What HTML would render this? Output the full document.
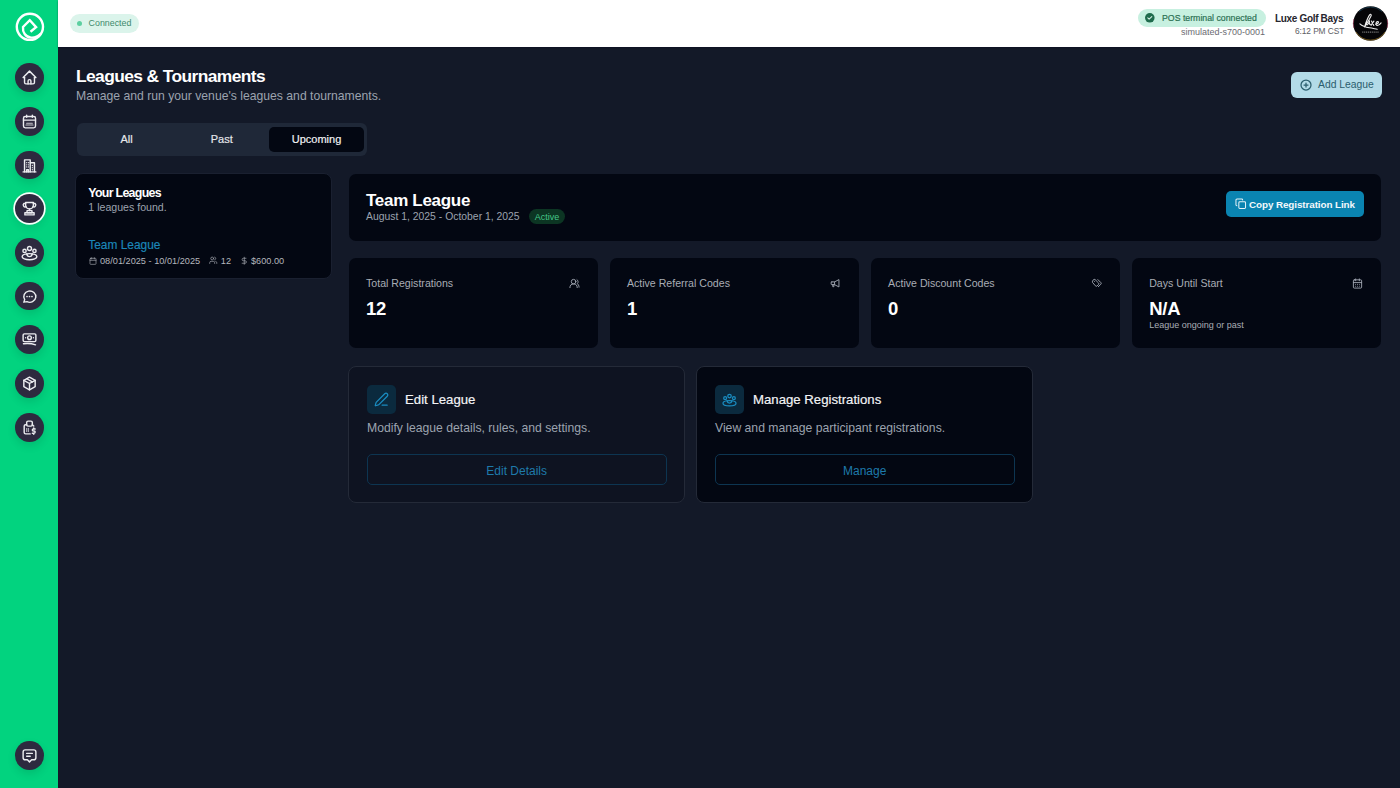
<!DOCTYPE html>
<html><head><meta charset="utf-8">
<style>
*{margin:0;padding:0;box-sizing:border-box}
html,body{width:1400px;height:788px;overflow:hidden;background:#131928;font-family:"Liberation Sans",sans-serif}
.abs{position:absolute}
#side{position:absolute;left:0;top:0;width:59.3px;height:788px;background:#02d37f;border-right:1px solid #15162a}
.nav{position:absolute;left:14.8px;width:28.8px;height:28.8px;border-radius:50%;background:#2d2a3f;box-shadow:0 4px 9px rgba(0,0,0,.11)}
.nav svg{position:absolute;left:6px;top:6px}
.nav.act{box-shadow:0 0 0 1.7px #f4fffa,0 4px 9px rgba(0,0,0,.11)}
#hdr{position:absolute;left:58.4px;top:0;width:1342px;height:46.8px;background:#fff;box-shadow:0 1px 1.5px rgba(10,10,30,.5)}
.pill{position:absolute;border-radius:999px}
.t{position:absolute;white-space:nowrap;line-height:1}
.card{position:absolute;background:#030712;border-radius:7px}
svg{overflow:visible}
</style></head><body>
<div id="side">
  <svg class="abs" style="left:14.5px;top:12.3px" width="30" height="30" viewBox="0 0 30 30">
    <circle cx="14.9" cy="14.8" r="13.1" fill="none" stroke="#fff" stroke-width="2.4"/>
    <path d="M15.5 19.8L21.1 15.2L14.8 8.2L8 15C7.4 20 10.5 25.2 16 25.6C19.5 25.9 23 24.5 25.6 21.8" fill="none" stroke="#fff" stroke-width="2.4" stroke-linejoin="miter" stroke-linecap="butt"/>
  </svg>
  <div class="nav" style="top:63.0px"><svg width="17" height="17" viewBox="0 0 24 24"><g fill="none" stroke="#ececf0" stroke-width="2" stroke-linecap="round" stroke-linejoin="round"><path d="M5 12H3l9-9 9 9h-2"/><path d="M5 12v7a2 2 0 0 0 2 2h10a2 2 0 0 0 2-2v-7"/><path d="M10 21v-4a2 2 0 0 1 4 0v4"/></g></svg></div>
  <div class="nav" style="top:106.8px"><svg width="17" height="17" viewBox="0 0 24 24"><g fill="none" stroke="#ececf0" stroke-width="2" stroke-linecap="round" stroke-linejoin="round"><rect x="3.5" y="5" width="17" height="16" rx="2.5"/><path d="M3.5 10h17M8 3v3M16 3v3"/><path d="M7 17h10M8 14.5h8" stroke-width="1.6" opacity=".8"/></g></svg></div>
  <div class="nav" style="top:150.5px"><svg width="17" height="17" viewBox="0 0 24 24"><g fill="none" stroke="#ececf0" stroke-width="2" stroke-linecap="round" stroke-linejoin="round"><path d="M3 21h18"/><path d="M5 21V4h8v17"/><path d="M13 8h6v13"/><path d="M8 8h0M10.5 8h0M8 11h0M10.5 11h0M8 14h0M10.5 14h0M16 12h0M16 15h0M16 18h0" stroke-width="1.8"/><path d="M8 21v-3h2.5v3"/></g></svg></div>
  <div class="nav act" style="top:194.3px"><svg width="17" height="17" viewBox="0 0 24 24"><g fill="none" stroke="#ececf0" stroke-width="2" stroke-linecap="round" stroke-linejoin="round"><path d="M6.5 3.5h11v3.5a5.5 5.5 0 0 1-11 0z"/><path d="M6.5 5H4a2.8 2.8 0 0 0 3.2 4.5M17.5 5H20a2.8 2.8 0 0 1-3.2 4.5"/><path d="M12 12.5v2.5"/><path d="M8.5 15h7v3h-7z"/><path d="M5.5 18h13v3h-13z"/></g></svg></div>
  <div class="nav" style="top:237.9px"><svg width="17" height="17" viewBox="0 0 24 24"><g fill="none" stroke="#ececf0" stroke-width="2" stroke-linecap="round" stroke-linejoin="round"><circle cx="12" cy="6.4" r="2.8"/><circle cx="5" cy="9.8" r="2.3"/><circle cx="19" cy="9.8" r="2.3"/><path d="M8 14C4 14.5 1.6 16 1.6 18c0 2.4 4.7 4.3 10.4 4.3S22.4 20.4 22.4 18c0-2-2.4-3.5-6.4-4"/><path d="M8 14c.6 2.5 2 3.8 4 3.8s3.4-1.3 4-3.8c-1.2-.3-2.6-.4-4-.4s-2.8.1-4 .4z"/></g></svg></div>
  <div class="nav" style="top:281.5px"><svg width="17" height="17" viewBox="0 0 24 24"><g fill="none" stroke="#ececf0" stroke-width="2" stroke-linecap="round" stroke-linejoin="round"><path d="M4 20l1.2-3.6A8.5 8 0 1 1 8.5 19.3z"/><path d="M8.5 12h.01M12 12h.01M15.5 12h.01" stroke-width="2.4"/></g></svg></div>
  <div class="nav" style="top:325.2px"><svg width="17" height="17" viewBox="0 0 24 24"><g fill="none" stroke="#ececf0" stroke-width="2" stroke-linecap="round" stroke-linejoin="round"><rect x="3" y="4" width="18" height="11" rx="1.8"/><circle cx="12" cy="9.5" r="2.6"/><path d="M6.5 9.5h.01M17.5 9.5h.01"/><path d="M3.5 18c5-.6 11-.6 17 1.5"/></g></svg></div>
  <div class="nav" style="top:368.9px"><svg width="17" height="17" viewBox="0 0 24 24"><g fill="none" stroke="#ececf0" stroke-width="2" stroke-linecap="round" stroke-linejoin="round" stroke-width="2.3"><path d="M12 3l8 4.5v9L12 21l-8-4.5v-9z"/><path d="M4 7.5l8 4.5 8-4.5M12 12v9"/><path d="M8 5.3l8 4.5"/></g></svg></div>
  <div class="nav" style="top:412.8px"><svg width="17" height="17" viewBox="0 0 24 24"><g fill="none" stroke="#ececf0" stroke-width="2" stroke-linecap="round" stroke-linejoin="round"><rect x="8" y="3" width="8" height="7" rx="2"/><path d="M8 8H6.5a2 2 0 0 0-2 2v9a2 2 0 0 0 2 2H13"/><path d="M16 8l2 2"/><path d="M8 14h0M10.5 14h0M8 17h0M10.5 17h0"/><path d="M20 14h-2.5a1.5 1.5 0 0 0 0 3h1a1.5 1.5 0 0 1 0 3H16M18 12.5v1.5M18 20v1.5"/></g></svg></div>
  <div class="nav" style="top:740.8px"><svg width="17" height="17" viewBox="0 0 24 24"><g fill="none" stroke="#ececf0" stroke-width="2" stroke-linecap="round" stroke-linejoin="round"><path d="M9 18H6a3 3 0 0 1-3-3V7a3 3 0 0 1 3-3h12a3 3 0 0 1 3 3v8a3 3 0 0 1-3 3h-3l-3 3z"/><path d="M8 9h8M8 13h5"/></g></svg></div>
</div>
<div id="hdr"></div>
<div class="pill" style="left:70px;top:14px;width:69px;height:19px;background:#dbf4eb"></div>
<div class="abs" style="left:76.8px;top:20.6px;width:5.6px;height:5.6px;border-radius:50%;background:#5ccfa0"></div>
<div class="t" style="left:88.6px;top:19.31px;font-size:8.85px;font-weight:normal;color:#3e8a6c;">Connected</div>
<div class="pill" style="left:1138px;top:9px;width:128px;height:17.5px;background:#c7f0e0"></div>
<svg class="abs" style="left:1145.2px;top:12.8px" width="9.6" height="9.6" viewBox="0 0 24 24"><circle cx="12" cy="12" r="12" fill="#1f6b4c"/><path d="M7 12.3l3.3 3.2L17 9" fill="none" stroke="#d9f3e8" stroke-width="2.6" stroke-linecap="round" stroke-linejoin="round"/></svg>
<div class="t" style="left:1162px;top:13.89px;font-size:8.75px;font-weight:normal;color:#2a6f52;-webkit-text-stroke:0.18px currentColor;">POS terminal connected</div>
<div class="t" style="left:1181px;top:27.98px;font-size:9.0px;font-weight:normal;color:#6b6b72;">simulated-s700-0001</div>
<div class="t" style="left:1275px;top:13.93px;font-size:10.0px;font-weight:bold;color:#26262e;letter-spacing:-0.33px;">Luxe Golf Bays</div>
<div class="t" style="left:1295px;top:26.69px;font-size:8.4px;font-weight:normal;color:#5d5d64;letter-spacing:-0.1px;">6:12 PM CST</div>
<svg class="abs" style="left:1353.3px;top:6px" width="35" height="35" viewBox="0 0 35 35">
<circle cx="17.5" cy="17.5" r="17.3" fill="#050508"/>
<path d="M6 5.5A17 17 0 0 1 29 5.5" fill="none" stroke="#2a6f90" stroke-width=".8" opacity=".55"/>
<path d="M.9 13A17 17 0 0 0 .9 22M34.1 13A17 17 0 0 1 34.1 22" fill="none" stroke="#a02a50" stroke-width=".9" opacity=".6"/>
<path d="M3 26A17 17 0 0 0 32 26" fill="none" stroke="#c8962a" stroke-width=".9" opacity=".6"/>
<g fill="none" stroke="#eeeeee" stroke-width="1.1" stroke-linecap="round" stroke-linejoin="round">
<path d="M11.6 20.8C13 16.5 14.6 11.5 16.6 8.9c1.3-1.4 2.2-.3 1.2 1.7-1.5 3-4 7.2-6.2 10.2"/>
<path d="M6.9 17.9c2.4 2.3 6 3.4 9.5 3.9 2.8.4 5.6 1.1 7.8 1.5"/>
<path d="M13.8 15.3c-.8 2-.6 3.9.6 3.5 1-.4 1.6-2.4 2.1-3.9-.3 2-.2 3.8.9 3.5"/>
<path d="M18.4 15c.9 1.4 1.7 2.9 2.4 4.4M20.9 15.1c-1 1.4-1.9 2.8-2.9 4.3"/>
<path d="M22.6 18.2c1.5-.1 2.9-1 2.9-2.1 0-1-1.4-.8-2.1.3-.9 1.5-.4 3.1 1.1 3.1 1.3 0 2.6-1.2 3.6-2.6"/>
</g>
<path d="M9.2 26.1h17" stroke="#bdbdbd" stroke-width="1.2" stroke-dasharray="1.2 .7" opacity=".6"/>
</svg>
<div class="t" style="left:76px;top:68.17px;font-size:17.4px;font-weight:bold;color:#ffffff;letter-spacing:-0.6px;">Leagues &amp; Tournaments</div>
<div class="t" style="left:76px;top:90.37px;font-size:12.2px;font-weight:normal;color:#9ca3af;">Manage and run your venue's leagues and tournaments.</div>
<div class="abs" style="left:1291.3px;top:71.8px;width:91px;height:26px;border-radius:6px;background:#b3dbe8"></div>
<svg class="abs" style="left:1299.6px;top:78.8px" width="12" height="12" viewBox="0 0 24 24"><g fill="none" stroke="#2b5e6e" stroke-width="2.5" stroke-linecap="round"><circle cx="12" cy="12" r="10"/><path d="M8 12h8M12 8v8"/></g></svg>
<div class="t" style="left:1318px;top:80.44px;font-size:10.35px;font-weight:normal;color:#2b5d6d;">Add League</div>
<div class="abs" style="left:76.5px;top:123.3px;width:290.5px;height:33px;border-radius:6px;background:#1f2838"></div>
<div class="abs" style="left:269.3px;top:126.5px;width:94.7px;height:25.8px;border-radius:5px;background:#030712"></div>
<div class="t" style="left:26.5px;width:200px;text-align:center;top:134.09px;font-size:11.0px;font-weight:normal;color:#e5e7eb;-webkit-text-stroke:0.18px currentColor;">All</div>
<div class="t" style="left:121.69999999999999px;width:200px;text-align:center;top:134.09px;font-size:11.0px;font-weight:normal;color:#e5e7eb;-webkit-text-stroke:0.18px currentColor;">Past</div>
<div class="t" style="left:216.5px;width:200px;text-align:center;top:134.09px;font-size:11.0px;font-weight:normal;color:#f3f4f6;-webkit-text-stroke:0.18px currentColor;">Upcoming</div>
<div class="card" style="left:75.3px;top:173.2px;width:256.3px;height:106px;border:1.7px solid #1a2030;border-radius:8px"></div>
<div class="t" style="left:88.3px;top:187.40px;font-size:12.4px;font-weight:bold;color:#ffffff;letter-spacing:-0.7px;">Your Leagues</div>
<div class="t" style="left:88.3px;top:202.43px;font-size:10.6px;font-weight:normal;color:#9ca3af;">1 leagues found.</div>
<div class="t" style="left:88.3px;top:239.73px;font-size:11.9px;font-weight:normal;color:#1b86b8;-webkit-text-stroke:0.18px currentColor;">Team League</div>
<svg class="abs" style="left:88.7px;top:256.5px" width="8" height="8" viewBox="0 0 24 24"><g fill="none" stroke="#a3a6ae" stroke-width="2" stroke-linecap="round" stroke-linejoin="round"><rect x="3" y="4" width="18" height="18" rx="2"/><path d="M16 2v4M8 2v4M3 10h18"/></g></svg>
<div class="t" style="left:100px;top:256.71px;font-size:9.2px;font-weight:normal;color:#b3b6bd;">08/01/2025 - 10/01/2025</div>
<svg class="abs" style="left:208.8px;top:256px" width="8.5" height="8.5" viewBox="0 0 24 24"><g fill="none" stroke="#a3a6ae" stroke-width="2" stroke-linecap="round" stroke-linejoin="round"><path d="M16 21v-2a4 4 0 0 0-4-4H6a4 4 0 0 0-4 4v2"/><circle cx="9" cy="7" r="4"/><path d="M22 21v-2a4 4 0 0 0-3-3.87M16 3.13a4 4 0 0 1 0 7.75"/></g></svg>
<div class="t" style="left:220.8px;top:256.71px;font-size:9.2px;font-weight:normal;color:#b3b6bd;">12</div>
<svg class="abs" style="left:239.5px;top:255.5px" width="8.5" height="9.5" viewBox="0 0 24 24"><g fill="none" stroke="#a3a6ae" stroke-width="2" stroke-linecap="round" stroke-linejoin="round"><path d="M12 2v20M17 5H9.5a3.5 3.5 0 0 0 0 7h5a3.5 3.5 0 0 1 0 7H6"/></g></svg>
<div class="t" style="left:251px;top:256.71px;font-size:9.2px;font-weight:normal;color:#b3b6bd;">$600.00</div>
<div class="card" style="left:348.6px;top:174px;width:1032.2px;height:66.7px"></div>
<div class="t" style="left:366px;top:192.41px;font-size:17.0px;font-weight:bold;color:#ffffff;letter-spacing:-0.3px;">Team League</div>
<div class="t" style="left:366px;top:212.40px;font-size:10.4px;font-weight:normal;color:#9ca3af;">August 1, 2025 - October 1, 2025</div>
<div class="pill" style="left:529.4px;top:209px;width:35.3px;height:15px;background:#0c3523"></div>
<div class="t" style="left:527.0px;width:40px;text-align:center;top:212.88px;font-size:9.0px;font-weight:normal;color:#45c689;">Active</div>
<div class="abs" style="left:1225.6px;top:191.2px;width:138.2px;height:26.1px;border-radius:5px;background:#0a84b1"></div>
<svg class="abs" style="left:1234.5px;top:198px" width="11.5" height="11.5" viewBox="0 0 24 24"><g fill="none" stroke="#e6f3f8" stroke-width="2.1" stroke-linecap="round" stroke-linejoin="round"><rect x="8" y="8" width="14" height="14" rx="2"/><path d="M4 16c-1.1 0-2-.9-2-2V4c0-1.1.9-2 2-2h10c1.1 0 2 .9 2 2"/></g></svg>
<div class="t" style="left:1249px;top:199.82px;font-size:9.9px;font-weight:bold;color:#f2f8fb;letter-spacing:-0.1px;">Copy Registration Link</div>
<div class="card" style="left:348.7px;top:258.3px;width:249px;height:90px"></div>
<div class="t" style="left:366.0px;top:278.03px;font-size:10.6px;font-weight:normal;color:#a9adb5;">Total Registrations</div>
<svg class="abs" style="left:569.2px;top:277.5px" width="11" height="11" viewBox="0 0 24 24"><g fill="none" stroke="#a3a9b4" stroke-width="2" stroke-linecap="round" stroke-linejoin="round"><path d="M18 21a8 8 0 0 0-16 0"/><circle cx="10" cy="8" r="5"/><path d="M22 20c0-3.37-2-6.5-4-8a5 5 0 0 0-.45-8.3"/></g></svg>
<div class="t" style="left:366.0px;top:299.54px;font-size:18.5px;font-weight:bold;color:#ffffff;letter-spacing:-0.2px;">12</div>
<div class="card" style="left:609.6px;top:258.3px;width:249px;height:90px"></div>
<div class="t" style="left:626.9px;top:278.03px;font-size:10.6px;font-weight:normal;color:#a9adb5;">Active Referral Codes</div>
<svg class="abs" style="left:830.1px;top:277.5px" width="11" height="11" viewBox="0 0 24 24"><g fill="none" stroke="#a3a9b4" stroke-width="2" stroke-linecap="round" stroke-linejoin="round"><path d="M4 8.5h6v6H4a1.5 1.5 0 0 1-1.5-1.5v-3A1.5 1.5 0 0 1 4 8.5z"/><path d="M10 8.5l9.5-5v16l-9.5-5"/><path d="M6 14.5v4.5h2.5v-4.5"/></g></svg>
<div class="t" style="left:626.9px;top:299.54px;font-size:18.5px;font-weight:bold;color:#ffffff;letter-spacing:-0.2px;">1</div>
<div class="card" style="left:870.8px;top:258.3px;width:249px;height:90px"></div>
<div class="t" style="left:888.0999999999999px;top:278.03px;font-size:10.6px;font-weight:normal;color:#a9adb5;">Active Discount Codes</div>
<svg class="abs" style="left:1091.3px;top:277.5px" width="11" height="11" viewBox="0 0 24 24"><g fill="none" stroke="#a3a9b4" stroke-width="2" stroke-linecap="round" stroke-linejoin="round"><path d="M3 8.5A5 5 0 0 1 8.5 3L16.5 11a2.2 2.2 0 0 1 0 3.1l-3.4 3.4a2.2 2.2 0 0 1-3.1 0z"/><path d="M7.5 7.5h.01"/><path d="M15 3.5l6.5 6.5a2.5 2.5 0 0 1 0 3.5L16 19"/></g></svg>
<div class="t" style="left:888.0999999999999px;top:299.54px;font-size:18.5px;font-weight:bold;color:#ffffff;letter-spacing:-0.2px;">0</div>
<div class="card" style="left:1131.9px;top:258.3px;width:249px;height:90px"></div>
<div class="t" style="left:1149.2px;top:278.03px;font-size:10.6px;font-weight:normal;color:#a9adb5;">Days Until Start</div>
<svg class="abs" style="left:1352.4px;top:277.5px" width="11" height="11" viewBox="0 0 24 24"><g fill="none" stroke="#a3a9b4" stroke-width="2" stroke-linecap="round" stroke-linejoin="round"><rect x="3" y="4" width="18" height="18" rx="2"/><path d="M16 2v4M8 2v4M3 10h18M8 14h.01M12 14h.01M16 14h.01M8 18h.01M12 18h.01M16 18h.01"/></g></svg>
<div class="t" style="left:1149.2px;top:299.54px;font-size:18.5px;font-weight:bold;color:#ffffff;letter-spacing:-0.2px;">N/A</div>
<div class="t" style="left:1149.2px;top:321.38px;font-size:9.0px;font-weight:normal;color:#a9adb5;">League ongoing or past</div>
<div class="card" style="left:348.4px;top:366.3px;width:336.2px;height:136.9px;background:#0e1321;border:1.2px solid #242a38;border-radius:8px"></div>
<div class="card" style="left:696.4px;top:366.3px;width:336.2px;height:136.9px;background:#030712;border:1.2px solid #242a38;border-radius:8px"></div>
<div class="abs" style="left:367.0px;top:384.6px;width:29px;height:29px;border-radius:5px;background:#0b2a3e"></div>
<svg class="abs" style="left:374.0px;top:391.6px" width="15" height="15" viewBox="0 0 24 24"><g fill="none" stroke="#1a8cc0" stroke-width="2" stroke-linecap="round" stroke-linejoin="round"><path d="M13 21h8"/><path d="M21.2 6.8a2.8 2.8 0 0 0-4-4L3.8 16.2a2 2 0 0 0-.5.8l-1.3 4.4a.5.5 0 0 0 .6.6l4.4-1.3a2 2 0 0 0 .8-.5z"/></g></svg>
<div class="t" style="left:405.0px;top:393.13px;font-size:13.2px;font-weight:normal;color:#f3f4f6;-webkit-text-stroke:0.18px currentColor;">Edit League</div>
<div class="t" style="left:367.0px;top:422.07px;font-size:12.2px;font-weight:normal;color:#9ca3af;">Modify league details, rules, and settings.</div>
<div class="abs" style="left:366.5px;top:454.1px;width:300.5px;height:31.4px;border-radius:5px;border:1px solid #0d3551"></div>
<div class="t" style="left:416.70000000000005px;width:200px;text-align:center;top:464.54px;font-size:12.0px;font-weight:normal;color:#1e7aab;">Edit Details</div>
<div class="abs" style="left:715.0px;top:384.6px;width:29px;height:29px;border-radius:5px;background:#0b2a3e"></div>
<svg class="abs" style="left:722.0px;top:391.6px" width="15" height="15" viewBox="0 0 24 24"><g fill="none" stroke="#1a8cc0" stroke-width="2" stroke-linecap="round" stroke-linejoin="round"><circle cx="12" cy="6.4" r="2.8"/><circle cx="5" cy="9.8" r="2.3"/><circle cx="19" cy="9.8" r="2.3"/><path d="M8 14C4 14.5 1.6 16 1.6 18c0 2.4 4.7 4.3 10.4 4.3S22.4 20.4 22.4 18c0-2-2.4-3.5-6.4-4"/><path d="M8 14c.6 2.5 2 3.8 4 3.8s3.4-1.3 4-3.8c-1.2-.3-2.6-.4-4-.4s-2.8.1-4 .4z"/></g></svg>
<div class="t" style="left:753.0px;top:393.13px;font-size:13.2px;font-weight:normal;color:#f3f4f6;-webkit-text-stroke:0.18px currentColor;">Manage Registrations</div>
<div class="t" style="left:715.0px;top:422.07px;font-size:12.2px;font-weight:normal;color:#9ca3af;">View and manage participant registrations.</div>
<div class="abs" style="left:714.5px;top:454.1px;width:300.5px;height:31.4px;border-radius:5px;border:1px solid #0d3551"></div>
<div class="t" style="left:764.7px;width:200px;text-align:center;top:464.54px;font-size:12.0px;font-weight:normal;color:#1e7aab;">Manage</div>
</body></html>
